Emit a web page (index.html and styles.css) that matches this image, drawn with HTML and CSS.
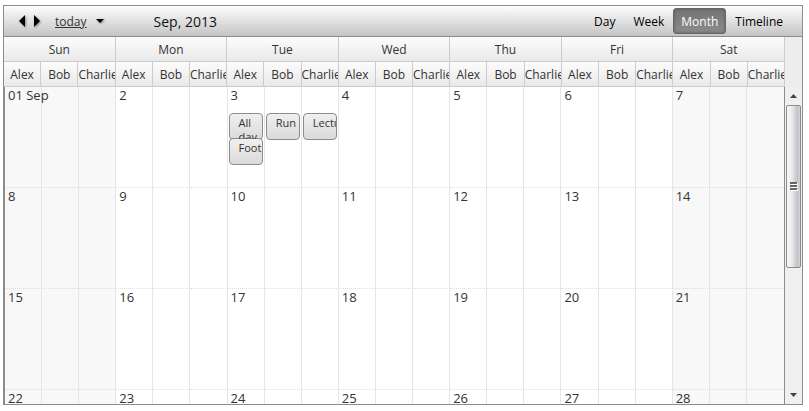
FILE: index.html
```
<!DOCTYPE html>
<html lang="en">
<head>
<meta charset="utf-8">
<title>Scheduler</title>
<link rel="stylesheet" href="styles.css">
</head>
<body>
<main class="scheduler">
  <header class="toolbar">
    <button class="icon-button prev" aria-label="Previous month"><svg width="8" height="14" viewBox="0 0 8 14"><path d="M7 1v12L1 7z"/></svg></button>
    <button class="icon-button next" aria-label="Next month"><svg width="8" height="14" viewBox="0 0 8 14"><path d="M1 1v12l6-6z"/></svg></button>
    <a class="today" href="#">today</a>
    <button class="icon-button pick" aria-label="Pick a date"><svg width="10" height="8" viewBox="0 0 10 8"><path d="M1 2h8L5 6z"/></svg></button>
    <h1 class="title">Sep, 2013</h1>
    <nav class="views">
      <button class="view">Day</button>
      <button class="view">Week</button>
      <button class="view active" aria-pressed="true">Month</button>
      <button class="view">Timeline</button>
    </nav>
  </header>
  <div class="heads">
    <table class="head-table">
      <thead>
        <tr><th colspan="3">Sun</th><th colspan="3">Mon</th><th colspan="3">Tue</th><th colspan="3">Wed</th><th colspan="3">Thu</th><th colspan="3">Fri</th><th colspan="3">Sat</th></tr>
        <tr>
          <th>Alex</th><th>Bob</th><th>Charlie</th>
          <th>Alex</th><th>Bob</th><th>Charlie</th>
          <th>Alex</th><th>Bob</th><th>Charlie</th>
          <th>Alex</th><th>Bob</th><th>Charlie</th>
          <th>Alex</th><th>Bob</th><th>Charlie</th>
          <th>Alex</th><th>Bob</th><th>Charlie</th>
          <th>Alex</th><th>Bob</th><th>Charlie</th>
        </tr>
      </thead>
    </table>
  </div>
  <div class="content">
    <div class="month">
      <table class="month-table">
        <colgroup><col span="3" class="weekend"><col span="15"><col span="3" class="weekend"></colgroup>
        <tbody>
          <tr>
            <td><span class="date">01 Sep</span></td><td></td><td></td>
            <td><span class="date">2</span></td><td></td><td></td>
            <td><span class="date">3</span><div class="event">All day</div><div class="event stacked">Football</div></td><td><span class="date"></span><div class="event">Run</div></td><td><span class="date"></span><div class="event">Lecture</div></td>
            <td><span class="date">4</span></td><td></td><td></td>
            <td><span class="date">5</span></td><td></td><td></td>
            <td><span class="date">6</span></td><td></td><td></td>
            <td><span class="date">7</span></td><td></td><td></td>
          </tr>
          <tr>
            <td><span class="date">8</span></td><td></td><td></td>
            <td><span class="date">9</span></td><td></td><td></td>
            <td><span class="date">10</span></td><td></td><td></td>
            <td><span class="date">11</span></td><td></td><td></td>
            <td><span class="date">12</span></td><td></td><td></td>
            <td><span class="date">13</span></td><td></td><td></td>
            <td><span class="date">14</span></td><td></td><td></td>
          </tr>
          <tr>
            <td><span class="date">15</span></td><td></td><td></td>
            <td><span class="date">16</span></td><td></td><td></td>
            <td><span class="date">17</span></td><td></td><td></td>
            <td><span class="date">18</span></td><td></td><td></td>
            <td><span class="date">19</span></td><td></td><td></td>
            <td><span class="date">20</span></td><td></td><td></td>
            <td><span class="date">21</span></td><td></td><td></td>
          </tr>
          <tr>
            <td><span class="date">22</span></td><td></td><td></td>
            <td><span class="date">23</span></td><td></td><td></td>
            <td><span class="date">24</span></td><td></td><td></td>
            <td><span class="date">25</span></td><td></td><td></td>
            <td><span class="date">26</span></td><td></td><td></td>
            <td><span class="date">27</span></td><td></td><td></td>
            <td><span class="date">28</span></td><td></td><td></td>
          </tr>
        </tbody>
      </table>
    </div>
    <div class="scrollbar">
      <button class="arrow" aria-label="Scroll up"><svg width="7" height="4" viewBox="0 0 7 4"><path d="M0 4l3.500-4L7 4z"/></svg></button>
      <div class="track"><div class="thumb"><svg width="8" height="9" viewBox="0 0 8 9"><path class="grip-light" d="M1 1h7v2H1zM1 4h7v2H1zM1 7h7v2H1z"/><path class="grip-dark" d="M0 0h7v2H0zM0 3h7v2H0zM0 6h7v2H0z"/></svg></div></div>
      <button class="arrow" aria-label="Scroll down"><svg width="7" height="4" viewBox="0 0 7 4"><path d="M0 0h7L3.500 4z"/></svg></button>
    </div>
  </div>
</main>
</body>
</html>
```
FILE: styles.css
```
* { box-sizing: border-box; }
body {
  margin: 0;
  padding: 5px 6px 6px 3px;
  height: 100vh;
  background: #fff;
  color: #333;
  font: 12px/16px "Open Sans", "Noto Sans", sans-serif;
}
button { border: 0; padding: 0; background: none; font: inherit; color: inherit; }
.scheduler {
  height: 100%;
  display: flex;
  flex-direction: column;
  border: 1px solid #8c8c8c;
  overflow: hidden;
}
.toolbar {
  flex: none;
  display: flex;
  align-items: center;
  height: 31px;
  padding: 0 10px 0 14px;
  border-bottom: 1px solid #8c8c8c;
  background: linear-gradient(#fdfdfd, #c4c4c4);
}
.icon-button { display: flex; filter: drop-shadow(1px 1px 1px #888); }
.next { margin-left: 7px; }
.today { margin-left: 14px; padding-top: 2px; color: #333; }
.pick { margin-left: 8px; }
.title { margin: 0 0 0 49px; padding-top: 2px; font-size: 14px; line-height: 20px; font-weight: 400; color: #111; }
.views { display: flex; margin-left: auto; }
.view { height: 26px; padding: 1px 8px 0; border: 1px solid transparent; border-radius: 3px; color: #000; }
.view.active {
  padding: 1px 7px 0;
  border-color: #666;
  background: linear-gradient(#747474, #8b8b8b);
  box-shadow: inset 0 0 3px #555;
  color: #fff;
}
.heads { flex: none; padding-right: 17px; background: #ededed; }
table { width: 100%; table-layout: fixed; border-collapse: separate; border-spacing: 0; }
.head-table th {
  height: 25px;
  padding: 2px 0 0;
  overflow: hidden;
  white-space: nowrap;
  font-weight: 400;
  border-right: 1px solid #ccc;
  border-bottom: 1px solid #ccc;
  background: linear-gradient(#fcfcfc, #e9e9e9);
}
.content { flex: 1; min-height: 0; display: flex; }
.month {
  flex: 1;
  min-width: 0;
  overflow: hidden;
  border-left: 1px solid #8c8c8c;
  border-right: 1px solid #8c8c8c;
}
.weekend { background: #f8f8f8; }
.month-table td {
  height: 101px;
  padding: 0 1px;
  vertical-align: top;
  border-right: 1px solid #e6e6e6;
  border-bottom: 1px dotted #ddd;
}
.month-table td:last-child { border-right: 0; }
.date { display: block; height: 26px; padding: 0 2px; font-size: 13px; white-space: nowrap; }
.event {
  height: 27px;
  padding: 2px 0 0 9px;
  overflow: hidden;
  border: 1px solid #8c8c8c;
  border-radius: 4px;
  background: linear-gradient(#f0f0f0, #dadada);
  font-size: 11px;
  line-height: 14px;
}
.stacked { margin-top: -2px; }
.scrollbar { flex: none; width: 17px; display: flex; flex-direction: column; background: #f0f0f0; }
.arrow { height: 18px; display: flex; align-items: center; justify-content: center; fill: #444; }
.track { flex: 1; }
.thumb {
  height: 58%;
  margin: 0 1px;
  display: flex;
  align-items: center;
  justify-content: center;
  border: 1px solid #8c8c8c;
  border-radius: 2px;
  background: linear-gradient(90deg, #f8f8f8, #e8e8ea 40%, #c2c2c8 80%, #d4d4d8);
}
.grip-dark { fill: #666; }
.grip-light { fill: #fff; }
```
